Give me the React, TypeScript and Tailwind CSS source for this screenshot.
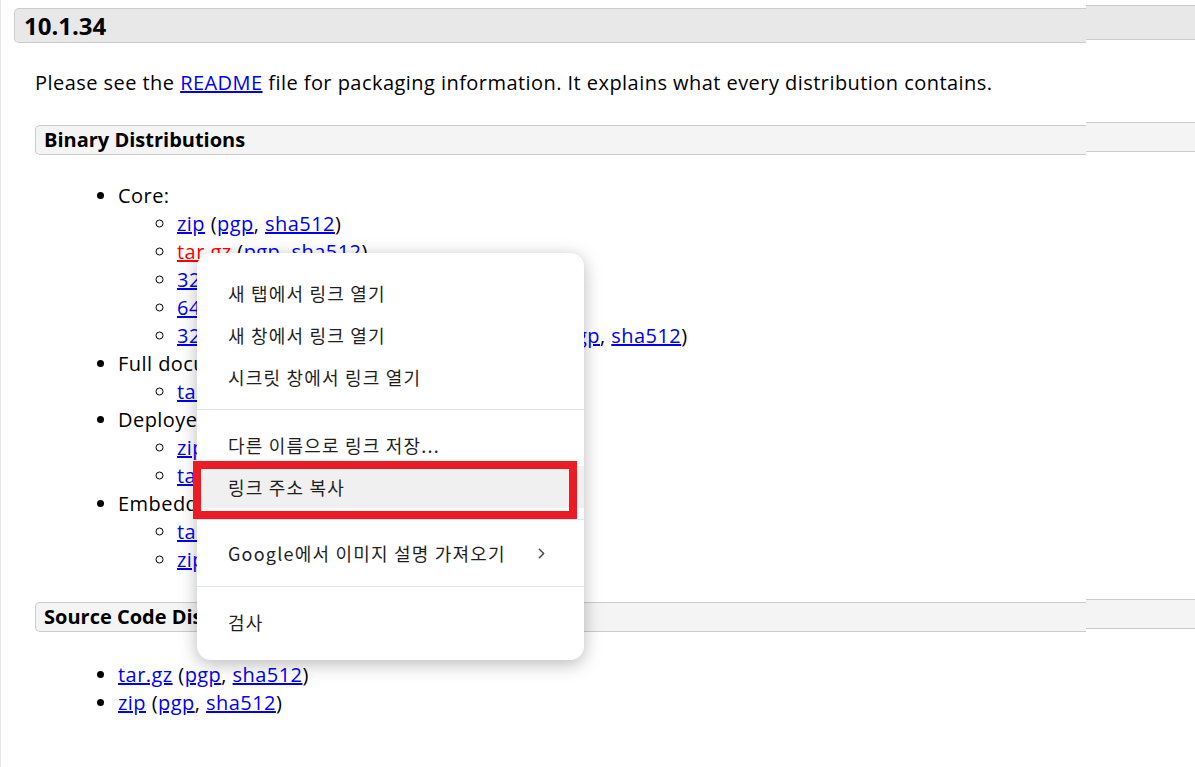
import React from "react";
import { ChevronRight } from "lucide-react";

const A: React.FC<{ children: React.ReactNode; red?: boolean }> = ({ children, red }) => (
  <a className={red ? "text-[#ff0000] underline" : "text-[#0000ee] underline"}>{children}</a>
);

const Sig: React.FC = () => (
  <>
    {" "}(<A>pgp</A>, <A>sha512</A>)
  </>
);

interface BarProps {
  title: string;
  width: string;
  big?: boolean;
}

const Bar: React.FC<BarProps> = ({ title, width, big }) => (
  <div className="flex items-start tracking-normal">
    <div
      className={
        big
          ? `${width} h-[35px] bg-[#e8e8e8] border-y border-l border-[#cccccc] rounded-l-[5px] pl-[9px] flex items-center text-[24px] font-bold`
          : `${width} h-[30px] bg-[#f4f4f4] border-y border-l border-[#cccccc] rounded-l-[5px] pl-[8px] flex items-center text-[20px] font-bold`
      }
    >
      {title}
    </div>
    <div
      className={
        big
          ? "flex-1 -mt-[3px] h-[35px] bg-[#e8e8e8] border-y border-[#cccccc]"
          : "flex-1 -mt-[3px] h-[30px] bg-[#f4f4f4] border-y border-[#cccccc]"
      }
    />
  </div>
);

const menuItem = "h-[42px] flex items-center pl-[31px] pr-[34px]";

export default function App() {
  return (
    <div
      className="relative w-[1195px] h-[767px] overflow-hidden bg-white border-l border-[#e4e4e4] text-black text-[20px] leading-[28px] tracking-[0.45px]"
      style={{ fontFamily: '"Open Sans", "Liberation Sans", sans-serif' }}
    >
      <div className="pt-[8px] pl-[13px]">
        <Bar title="10.1.34" width="w-[1072px]" big />
      </div>

      <div className="pl-[34px]">
        <p className="mt-[26px]">
          Please see the <A>README</A> file for packaging information. It explains what every
          distribution contains.
        </p>

        <div className="mt-[28px]">
          <Bar title="Binary Distributions" width="w-[1051px]" />
        </div>

        <ul className="mt-[27px] pl-[83px] list-disc">
          <li>
            Core:
            <ul className="pl-[59px] list-[circle]">
              <li>
                <A>zip</A>
                <Sig />
              </li>
              <li>
                <A red>tar.gz</A>
                <Sig />
              </li>
              <li>
                <A>32-bit Windows zip</A>
                <Sig />
              </li>
              <li>
                <A>64-bit Windows zip</A>
                <Sig />
              </li>
              <li>
                <A>32-bit/64-bit Windows Service Installer</A>
                <Sig />
              </li>
            </ul>
          </li>
          <li>
            Full documentation:
            <ul className="pl-[59px] list-[circle]">
              <li>
                <A>tar.gz</A>
                <Sig />
              </li>
            </ul>
          </li>
          <li>
            Deployer:
            <ul className="pl-[59px] list-[circle]">
              <li>
                <A>zip</A>
                <Sig />
              </li>
              <li>
                <A>tar.gz</A>
                <Sig />
              </li>
            </ul>
          </li>
          <li>
            Embedded:
            <ul className="pl-[59px] list-[circle]">
              <li>
                <A>tar.gz</A>
                <Sig />
              </li>
              <li>
                <A>zip</A>
                <Sig />
              </li>
            </ul>
          </li>
        </ul>

        <div className="mt-[28px]">
          <Bar title="Source Code Distributions" width="w-[1051px]" />
        </div>

        <ul className="mt-[29px] pl-[83px] list-disc">
          <li>
            <A>tar.gz</A>
            <Sig />
          </li>
          <li>
            <A>zip</A>
            <Sig />
          </li>
        </ul>
      </div>

      {/* context menu */}
      <div
        className="absolute left-[196px] top-[253px] w-[387px] h-[407px] bg-white rounded-[14px] shadow-[0_4px_18px_rgba(0,0,0,0.28)] pt-[19px] text-[18px] tracking-[1.2px] text-[#1f1f1f]"
        style={{ fontFamily: '"Noto Sans CJK KR", "Noto Sans", sans-serif' }}
      >
        <div className={menuItem}>새 탭에서 링크 열기</div>
        <div className={menuItem}>새 창에서 링크 열기</div>
        <div className={menuItem}>시크릿 창에서 링크 열기</div>
        <div className="mt-[11px] mb-[14px] h-px bg-[#dfe5ee]" />
        <div className={menuItem}>다른 이름으로 링크 저장...</div>
        <div className={`${menuItem} bg-[#f0f0f0]`}>링크 주소 복사</div>
        <div className="mt-[11px] mb-[12px] h-px bg-[#dfe5ee]" />
        <div className={`${menuItem} justify-between`}>
          <span>Google에서 이미지 설명 가져오기</span>
          <ChevronRight className="w-[17px] h-[17px] text-[#474747]" strokeWidth={2.2} />
        </div>
        <div className="mt-[12px] mb-[14px] h-px bg-[#dfe5ee]" />
        <div className={menuItem}>검사</div>
      </div>

      {/* annotation box */}
      <div className="absolute left-[192px] top-[461px] w-[384px] h-[58px] border-[8px] border-[#ed1c24]" />
    </div>
  );
}
